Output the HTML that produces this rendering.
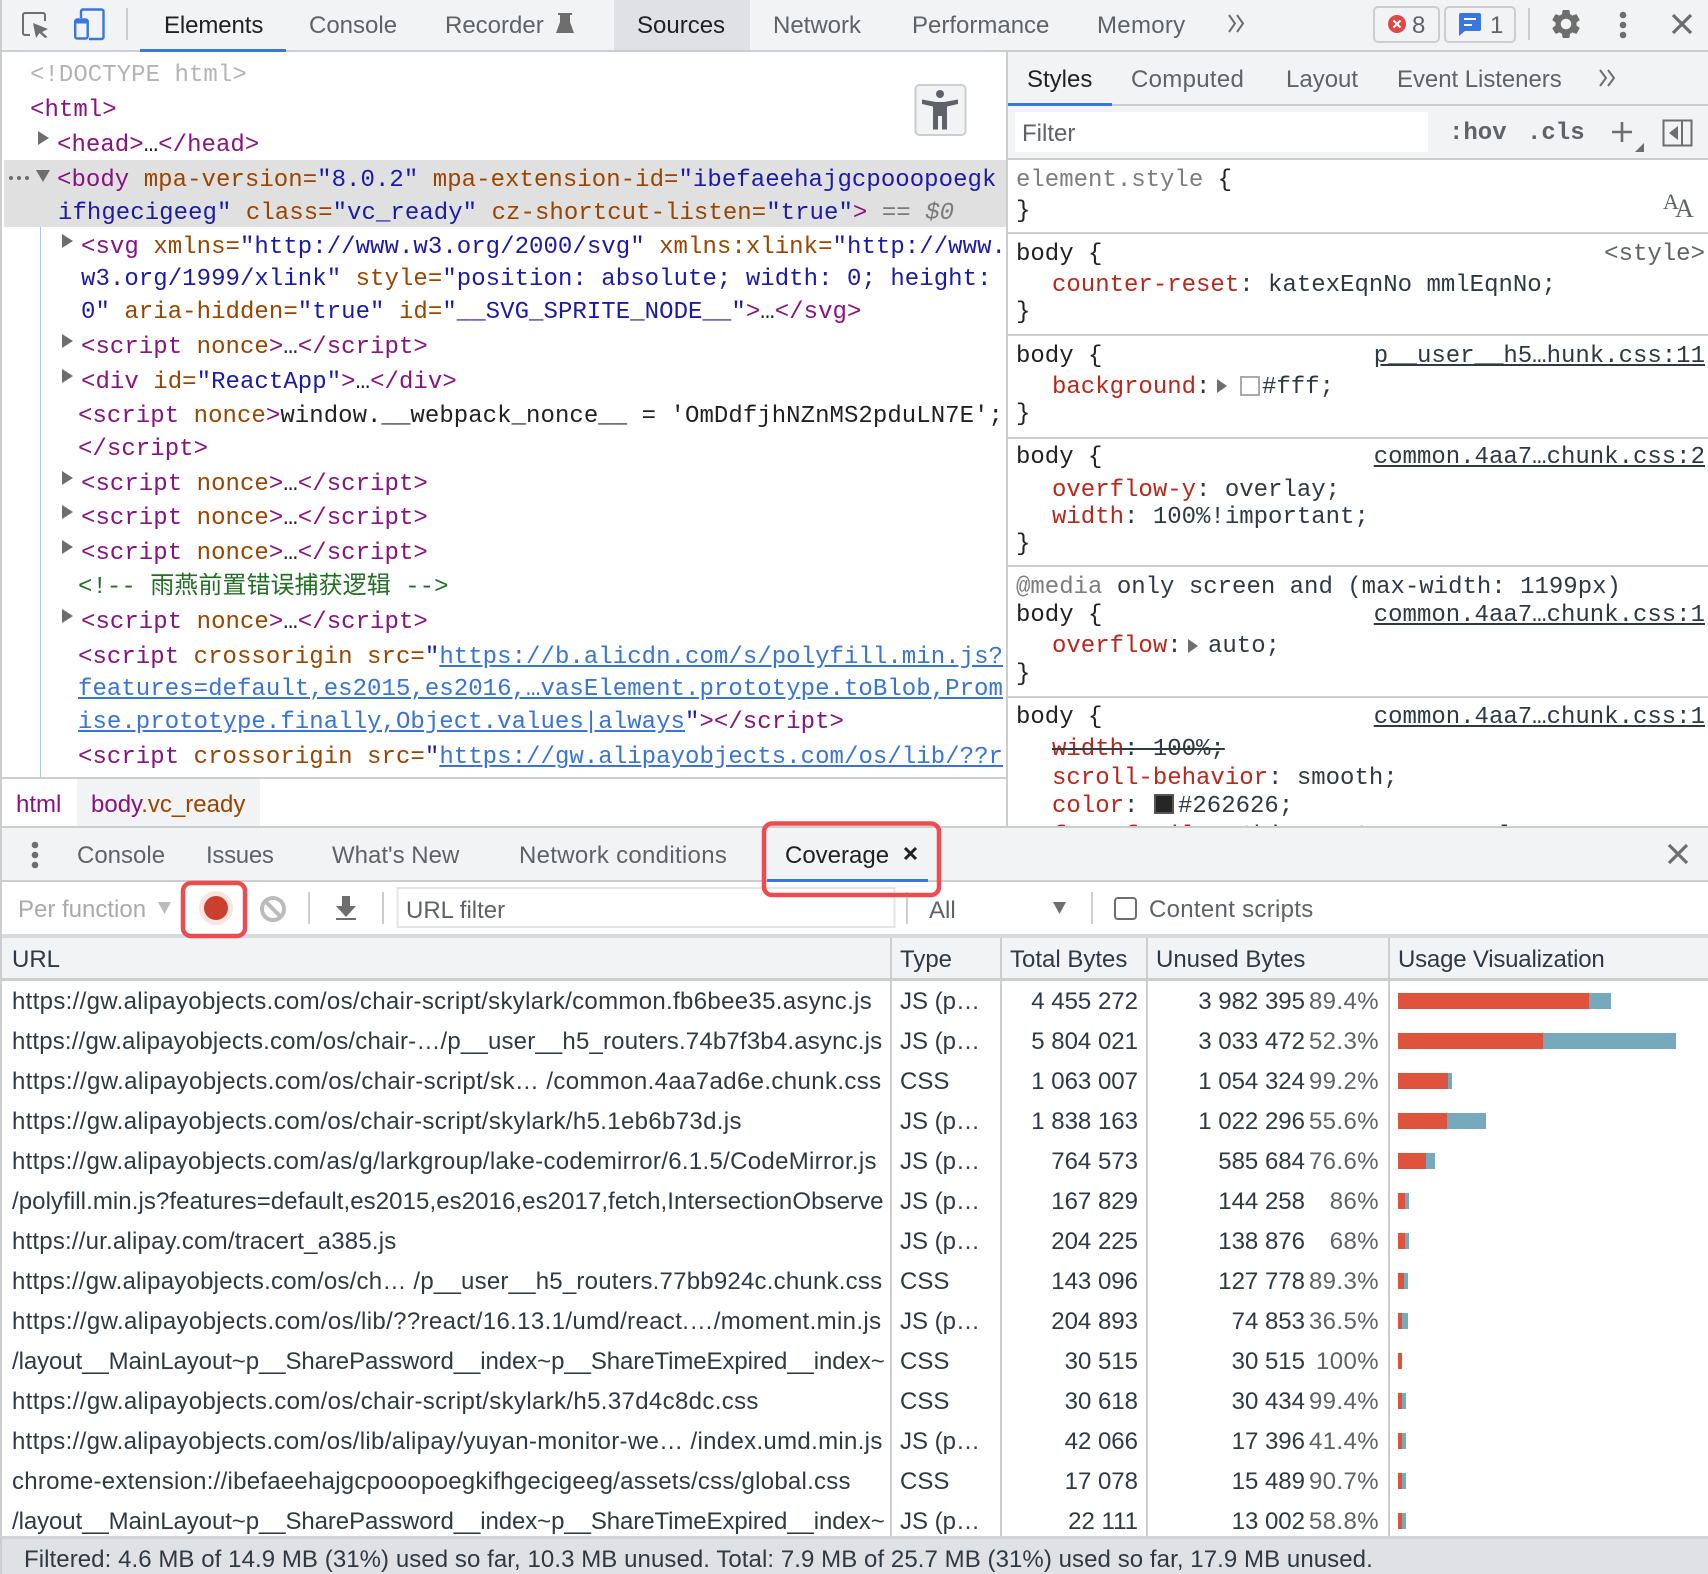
<!DOCTYPE html>
<html><head><meta charset="utf-8"><style>
html,body{margin:0;padding:0;background:#fff}
#p{position:relative;width:1708px;height:1574px;overflow:hidden;background:#fff}
#p svg.b{position:absolute;left:0;top:0}
.s,.m{position:absolute;white-space:pre;line-height:30px;height:30px}
.s{font:24px/30px "Liberation Sans","Noto Sans CJK SC",sans-serif;color:#303942}
.m{font:24px/30px "Liberation Mono","Noto Sans CJK SC",monospace;color:#303942;margin-top:3px}
.cd .m{letter-spacing:.05px}
.g{color:#5f6368}.k{color:#202124}
.c{position:absolute;left:0;top:0;width:1708px;height:1574px}
i{font-style:normal}
.t{color:#881280}.a{color:#994500}.v{color:#1a1aa6}.l{color:#3874d8;text-decoration:underline}
.p{color:#b9261a}.u{text-decoration:underline}
.n{color:#202124}
.pc{letter-spacing:.4px;color:#5f6368}
</style></head><body><div id="p">
<svg class="b" width="1708" height="1574" viewBox="0 0 1708 1574" xmlns="http://www.w3.org/2000/svg">
<rect x="0" y="0" width="1708" height="50" fill="#f1f3f4"/>
<rect x="614" y="0" width="136" height="50" fill="#dfe1e5"/>
<rect x="0" y="50" width="1708" height="2" fill="#cbcdd1"/>
<rect x="140" y="49" width="146" height="3" fill="#3a76e0"/>
<rect x="1008" y="52" width="700" height="106" fill="#f1f3f4"/>
<rect x="1008" y="104" width="700" height="2" fill="#cbcdd1"/>
<rect x="1008" y="103" width="104" height="3" fill="#3a76e0"/>
<rect x="1015" y="112" width="413" height="40" fill="#fff"/>
<rect x="1008" y="158" width="700" height="2" fill="#cbcdd1"/>
<rect x="1006" y="52" width="2" height="776" fill="#cbcdd1"/>
<rect x="4" y="160" width="1002" height="67" fill="#e0e0e0"/>
<rect x="40" y="227" width="1" height="550" fill="#a9c7f2"/>
<rect x="1008" y="232" width="700" height="2" fill="#cbcdd1"/>
<rect x="1008" y="334" width="700" height="2" fill="#cbcdd1"/>
<rect x="1008" y="437" width="700" height="2" fill="#cbcdd1"/>
<rect x="1008" y="565" width="700" height="2" fill="#cbcdd1"/>
<rect x="1008" y="696" width="700" height="2" fill="#cbcdd1"/>
<rect x="0" y="777" width="1006" height="2" fill="#cbcdd1"/>
<rect x="77" y="779" width="183" height="47" fill="#f1f3f4"/>
<rect x="0" y="826" width="1708" height="2" fill="#cbcdd1"/>
<rect x="0" y="828" width="1708" height="52" fill="#f1f3f4"/>
<rect x="0" y="880" width="1708" height="2" fill="#cbcdd1"/>
<rect x="767" y="879" width="161" height="3" fill="#3a76e0"/>
<rect x="0" y="934" width="1708" height="4" fill="#d8dadd"/>
<rect x="0" y="938" width="1708" height="40" fill="#f1f3f4"/>
<rect x="0" y="978" width="1708" height="3" fill="#cbcdd1"/>
<g fill="#cbcdd1"><rect x="890" y="938" width="2" height="598"/><rect x="1000" y="938" width="2" height="598"/><rect x="1146" y="938" width="2" height="598"/><rect x="1388" y="938" width="2" height="598"/></g>
<rect x="0" y="1536" width="1708" height="38" fill="#dfe1e5"/>
<rect x="0" y="1536" width="1708" height="3" fill="#d2d3d6"/>
<rect x="0" y="0" width="2" height="1574" fill="#cbcdd1"/>

<g fill="#df533c">
<rect x="1398" y="993" width="191" height="16"/><rect x="1398" y="1033" width="145" height="16"/><rect x="1398" y="1073" width="50" height="16"/><rect x="1398" y="1113" width="49" height="16"/><rect x="1398" y="1153" width="28" height="16"/><rect x="1398" y="1193" width="7" height="16"/><rect x="1398" y="1233" width="7" height="16"/><rect x="1398" y="1273" width="6" height="16"/><rect x="1398" y="1313" width="4" height="16"/><rect x="1398" y="1353" width="4" height="16"/><rect x="1398" y="1393" width="4" height="16"/><rect x="1398" y="1433" width="4" height="16"/><rect x="1398" y="1473" width="4" height="16"/><rect x="1398" y="1513" width="4" height="16"/>
</g>
<g fill="#76a9bc">
<rect x="1589" y="993" width="22" height="16"/><rect x="1543" y="1033" width="133" height="16"/><rect x="1448" y="1073" width="4" height="16"/><rect x="1447" y="1113" width="39" height="16"/><rect x="1426" y="1153" width="9" height="16"/><rect x="1405" y="1193" width="4" height="16"/><rect x="1405" y="1233" width="4" height="16"/><rect x="1404" y="1273" width="4" height="16"/><rect x="1402" y="1313" width="6" height="16"/><rect x="1402" y="1393" width="4" height="16"/><rect x="1402" y="1433" width="4" height="16"/><rect x="1402" y="1473" width="4" height="16"/><rect x="1402" y="1513" width="4" height="16"/>
</g>

<!-- inspect icon -->
<path d="M30 35H25a2 2 0 0 1-2-2V15a2 2 0 0 1 2-2H43a2 2 0 0 1 2 2V21" fill="none" stroke="#6e6e6e" stroke-width="2"/>
<path d="M33 23 L48 29 L42 32 L47.5 37 L45 38 L39.5 33 L36 38 Z" fill="#6e6e6e"/>
<!-- device icon -->
<path d="M81 18V11.5A2 2 0 0 1 83 9.5H101.5A2 2 0 0 1 103.500 11.500V37a2 2 0 0 1-2 2H89" fill="none" stroke="#3a76e0" stroke-width="2.400"/>
<rect x="75.200" y="19.500" width="12.500" height="19" rx="2" fill="none" stroke="#3a76e0" stroke-width="2.400"/>
<rect x="75.200" y="19.500" width="12.500" height="4" fill="#3a76e0"/>
<rect x="126" y="8" width="2" height="32" fill="#cbcdd1"/>
<!-- flask -->
<path d="M558 13H572V15H570V22L574 33H556L560 22V15H558Z" fill="#6e6e6e"/>
<!-- chevrons -->
<path d="M1229 15l6 8.500-6 8.500M1237 15l6 8.500-6 8.500" fill="none" stroke="#6e6e6e" stroke-width="2"/>
<path d="M1600 70l6 8-6 8M1608 70l6 8-6 8" fill="none" stroke="#6e6e6e" stroke-width="2"/>
<!-- badges -->
<rect x="1374" y="7" width="65" height="35" rx="4" fill="none" stroke="#cbcdd1" stroke-width="2"/>
<rect x="1445" y="7" width="70" height="35" rx="4" fill="none" stroke="#cbcdd1" stroke-width="2"/>
<circle cx="1397" cy="24" r="9" fill="#dc4a47"/>
<path d="M1393.500 20.500l7 7m0-7l-7 7" stroke="#fff" stroke-width="2"/>
<path d="M1461 13H1479a2 2 0 0 1 2 2V29a2 2 0 0 1-2 2H1465L1459 36V15a2 2 0 0 1 2-2Z" fill="#3a76e0"/>
<rect x="1464" y="18" width="12" height="2" fill="#fff"/><rect x="1464" y="24" width="8" height="2" fill="#fff"/>
<rect x="1528" y="8" width="2" height="32" fill="#cbcdd1"/>
<g transform="translate(1548.500 6.500) scale(1.460)"><path fill="#6e6e6e" d="M19.140 12.940c.04-.3.06-.61.06-.94 0-.32-.02-.64-.07-.94l2.030-1.580a.49.49 0 0 0 .12-.61l-1.920-3.320a.488.488 0 0 0-.59-.22l-2.390.96c-.5-.38-1.030-.7-1.620-.94l-.36-2.540a.484.484 0 0 0-.48-.41h-3.840c-.24 0-.43.17-.47.41l-.36 2.540c-.59.24-1.130.57-1.620.94l-2.390-.96c-.22-.08-.47 0-.59.22L2.740 8.870c-.12.21-.08.47.12.61l2.030 1.580c-.05.3-.09.63-.09.94s.02.64.07.94l-2.030 1.580a.49.49 0 0 0-.12.61l1.920 3.320c.12.22.37.29.59.22l2.390-.96c.5.38 1.030.7 1.620.94l.36 2.540c.05.24.24.41.48.41h3.840c.24 0 .44-.17.47-.41l.36-2.540c.59-.24 1.130-.56 1.620-.94l2.390.96c.22.08.47 0 .59-.22l1.920-3.320c.12-.22.07-.47-.12-.61l-2.010-1.580zM12 15.600c-1.980 0-3.600-1.620-3.600-3.600s1.620-3.600 3.600-3.600 3.600 1.620 3.600 3.600-1.620 3.600-3.600 3.600z"/></g>
<g fill="#6e6e6e"><circle cx="1623" cy="15" r="3.300"/><circle cx="1623" cy="25" r="3.300"/><circle cx="1623" cy="35" r="3.300"/></g>
<path d="M1673 15l18 18m0-18l-18 18" stroke="#6e6e6e" stroke-width="3.200"/>
<!-- a11y button -->
<rect x="915.500" y="85" width="50" height="50" rx="4" fill="#f1f3f4" stroke="#cbcdd1" stroke-width="2"/>
<circle cx="940" cy="94" r="4" fill="#5f6368"/>
<path d="M922 99.500L936 102H944L958 99.500V104L947 106.500V129.500H942V116H938V129.500H933V106.500L922 104Z" fill="#5f6368"/>
<!-- plus etc -->
<path d="M1622 122V142M1612 132H1632" stroke="#6e6e6e" stroke-width="2.600"/>
<path d="M1644 143V152H1635Z" fill="#6e6e6e"/>
<rect x="1663.500" y="120.500" width="28" height="25" fill="none" stroke="#6e6e6e" stroke-width="2"/>
<rect x="1681" y="120" width="2" height="26" fill="#6e6e6e"/>
<path d="M1678 126V140L1669 133Z" fill="#6e6e6e"/>
<!-- dom triangles -->
<g fill="#6e6e6e">
<path d="M38 131l11 7-11 7Z"/><path d="M36 170H50L43 182Z"/>
<path d="M62 234l11 7-11 7Z"/><path d="M62 334l11 7-11 7Z"/><path d="M62 369l11 7-11 7Z"/><path d="M62 471l11 7-11 7Z"/><path d="M62 505l11 7-11 7Z"/><path d="M62 540l11 7-11 7Z"/><path d="M62 609l11 7-11 7Z"/>
<path d="M1217 379l10 7-10 7Z"/><path d="M1188 639l10 7-10 7Z"/>
<circle cx="11" cy="178" r="2"/><circle cx="19" cy="178" r="2"/><circle cx="27" cy="178" r="2"/>
</g>
<rect x="1241" y="377" width="18" height="18" fill="#fff" stroke="#aaa" stroke-width="2"/>
<rect x="1155" y="795" width="18" height="18" fill="#262626" stroke="#555" stroke-width="2"/>
<!-- drawer icons -->
<g fill="#6e6e6e"><circle cx="35" cy="845" r="3.300"/><circle cx="35" cy="855" r="3.300"/><circle cx="35" cy="865" r="3.300"/></g>
<path d="M905 848l11 11m0-11l-11 11" stroke="#202124" stroke-width="3"/>
<path d="M1669 845l18 18m0-18l-18 18" stroke="#6e6e6e" stroke-width="3.200"/>
<path d="M158 902H171L164.500 914Z" fill="#bbb"/>
<circle cx="216" cy="908" r="17" fill="#f4c9c3" opacity=".5"/>
<circle cx="216" cy="908" r="12" fill="#c9402f"/>
<circle cx="273" cy="909" r="11" fill="none" stroke="#bbb" stroke-width="4"/>
<path d="M265.500 901.500l15 15" stroke="#bbb" stroke-width="4"/>
<rect x="308" y="892" width="2" height="32" fill="#cbcdd1"/>
<path d="M342 896H350V906H356L346 917L336 906H342Z" fill="#6e6e6e"/><rect x="336" y="918" width="20" height="2" fill="#6e6e6e"/>
<rect x="382" y="892" width="2" height="32" fill="#cbcdd1"/>
<rect x="397.500" y="888" width="497" height="39" fill="#fff" stroke="#e4e4e4" stroke-width="2"/>
<rect x="906" y="892" width="2" height="32" fill="#cbcdd1"/>
<path d="M1053 902H1066L1059.500 914Z" fill="#6e6e6e"/>
<rect x="1091" y="892" width="2" height="32" fill="#cbcdd1"/>
<rect x="1115" y="898" width="21" height="21" rx="3" fill="#fff" stroke="#6e6e6e" stroke-width="2"/>
</svg>

<div class="c">
<span class="s k" style="left:164px;top:11px;letter-spacing:-.1px">Elements</span>
<span class="s g" style="left:309px;top:11px">Console</span>
<span class="s g" style="left:445px;top:11px">Recorder</span>
<span class="s k" style="left:637px;top:11px">Sources</span>
<span class="s g" style="left:773px;top:11px">Network</span>
<span class="s g" style="left:912px;top:11px">Performance</span>
<span class="s g" style="left:1097px;top:11px;letter-spacing:.3px">Memory</span>
<span class="s g" style="left:1412px;top:11px">8</span>
<span class="s g" style="left:1490px;top:11px">1</span>
<span class="s k" style="left:1027px;top:65px">Styles</span>
<span class="s g" style="left:1131px;top:65px;letter-spacing:.3px">Computed</span>
<span class="s g" style="left:1286px;top:65px">Layout</span>
<span class="s g" style="left:1397px;top:65px;letter-spacing:-.05px">Event Listeners</span>
<span class="s g" style="left:1022px;top:119px">Filter</span>
<span class="m g" style="left:1449px;top:116px;font-weight:bold">:hov</span>
<span class="m g" style="left:1527px;top:116px;font-weight:bold">.cls</span>
<span class="s g" style="left:1663px;top:190px;font:22px/24px 'Liberation Serif',serif;height:24px">A</span>
<span class="s g" style="left:1675px;top:197px;font:26px/24px 'Liberation Serif',serif;height:24px">A</span>
</div>

<div class="c cd" style="clip-path:inset(52px 705px 797px 0)">
<span class="m" style="left:30px;top:58px;color:#b4b4b4">&lt;!DOCTYPE html&gt;</span>
<span class="m t" style="left:30px;top:93px">&lt;html&gt;</span>
<span class="m t" style="left:57px;top:128px">&lt;head&gt;<i class="n">…</i>&lt;/head&gt;</span>
<span class="m t" style="left:57px;top:163px">&lt;body <i class="a">mpa-version=</i><i class="v">"8.0.2"</i> <i class="a">mpa-extension-id=</i><i class="v">"ibefaeehajgcpooopoegk</i></span>
<span class="m v" style="left:58px;top:196px">ifhgecigeeg" <i class="a">class=</i>"vc_ready" <i class="a">cz-shortcut-listen=</i>"true"<i class="t">&gt;</i><i style="color:#7a7a7a"> == <em>$0</em></i></span>
<span class="m t" style="left:81px;top:230px">&lt;svg <i class="a">xmlns=</i><i class="v">"http://www.w3.org/2000/svg"</i> <i class="a">xmlns:xlink=</i><i class="v">"http://www.</i></span>
<span class="m v" style="left:81px;top:262px">w3.org/1999/xlink" <i class="a">style=</i>"position: absolute; width: 0; height:</span>
<span class="m v" style="left:81px;top:295px">0" <i class="a">aria-hidden=</i>"true" <i class="a">id=</i>"__SVG_SPRITE_NODE__"<i class="t">&gt;</i><i class="n">…</i><i class="t">&lt;/svg&gt;</i></span>
<span class="m t" style="left:81px;top:330px">&lt;script <i class="a">nonce</i>&gt;<i class="n">…</i>&lt;/script&gt;</span>
<span class="m t" style="left:81px;top:365px">&lt;div <i class="a">id=</i><i class="v">"ReactApp"</i>&gt;<i class="n">…</i>&lt;/div&gt;</span>
<span class="m t" style="left:78px;top:399px">&lt;script <i class="a">nonce</i>&gt;<i class="n">window.__webpack_nonce__ = 'OmDdfjhNZnMS2pduLN7E';</i></span>
<span class="m t" style="left:78px;top:432px">&lt;/script&gt;</span>
<span class="m t" style="left:81px;top:467px">&lt;script <i class="a">nonce</i>&gt;<i class="n">…</i>&lt;/script&gt;</span>
<span class="m t" style="left:81px;top:501px">&lt;script <i class="a">nonce</i>&gt;<i class="n">…</i>&lt;/script&gt;</span>
<span class="m t" style="left:81px;top:536px">&lt;script <i class="a">nonce</i>&gt;<i class="n">…</i>&lt;/script&gt;</span>
<span class="m" style="left:78px;top:570px;color:#236e25">&lt;!-- 雨燕前置错误捕获逻辑 --&gt;</span>
<span class="m t" style="left:81px;top:605px">&lt;script <i class="a">nonce</i>&gt;<i class="n">…</i>&lt;/script&gt;</span>
<span class="m t" style="left:78px;top:640px">&lt;script <i class="a">crossorigin src=</i><i class="v">"</i><i class="l">https://b.alicdn.com/s/polyfill.min.js?</i></span>
<span class="m l" style="left:78px;top:672px">features=default,es2015,es2016,…vasElement.prototype.toBlob,Prom</span>
<span class="m" style="left:78px;top:705px"><i class="l">ise.prototype.finally,Object.values|always</i><i class="v">"</i><i class="t">&gt;&lt;/script&gt;</i></span>
<span class="m t" style="left:78px;top:740px">&lt;script <i class="a">crossorigin src=</i><i class="v">"</i><i class="l">https://gw.alipayobjects.com/os/lib/??r</i></span>
<span class="m l" style="left:78px;top:773px">eact/16.13.1/umd/react.production.min.js,react-dom/16.13.1/umd/r</span>
</div>

<div class="c" style="clip-path:inset(160px 0 748px 1008px)">
<span class="m" style="left:1016px;top:163px"><i style="color:#7d7d7d">element.style</i> <i class="n">{</i></span>
<span class="m n" style="left:1016px;top:194px">}</span>
<span class="m n" style="left:1016px;top:237px">body {</span>
<span class="m g" style="right:3px;top:237px">&lt;style&gt;</span>
<span class="m" style="left:1052px;top:268px"><i class="p">counter-reset</i>: katexEqnNo mmlEqnNo;</span>
<span class="m n" style="left:1016px;top:295px">}</span>
<span class="m n" style="left:1016px;top:339px">body {</span>
<span class="m u" style="right:3px;top:339px">p__user__h5…hunk.css:11</span>
<span class="m p" style="left:1052px;top:370px">background<i style="color:#303942">:</i></span>
<span class="m" style="left:1262px;top:370px">#fff;</span>
<span class="m n" style="left:1016px;top:397px">}</span>
<span class="m n" style="left:1016px;top:440px">body {</span>
<span class="m u" style="right:3px;top:440px">common.4aa7…chunk.css:2</span>
<span class="m" style="left:1052px;top:473px"><i class="p">overflow-y</i>: overlay;</span>
<span class="m" style="left:1052px;top:500px"><i class="p">width</i>: 100%!important;</span>
<span class="m n" style="left:1016px;top:527px">}</span>
<span class="m" style="left:1016px;top:570px"><i style="color:#7d7d7d">@media</i> only screen and (max-width: 1199px)</span>
<span class="m n" style="left:1016px;top:598px">body {</span>
<span class="m u" style="right:3px;top:598px">common.4aa7…chunk.css:1</span>
<span class="m p" style="left:1052px;top:629px">overflow<i style="color:#303942">:</i></span>
<span class="m" style="left:1208px;top:629px">auto;</span>
<span class="m n" style="left:1016px;top:657px">}</span>
<span class="m n" style="left:1016px;top:700px">body {</span>
<span class="m u" style="right:3px;top:700px">common.4aa7…chunk.css:1</span>
<span class="m" style="left:1052px;top:732px;text-decoration:line-through;text-decoration-thickness:2px"><i class="p">width</i>: 100%;</span>
<span class="m" style="left:1052px;top:761px"><i class="p">scroll-behavior</i>: smooth;</span>
<span class="m p" style="left:1052px;top:789px">color<i style="color:#303942">:</i></span>
<span class="m" style="left:1178px;top:789px">#262626;</span>
<span class="m" style="left:1052px;top:819px"><i class="p">font-family</i>: Chinese Quote,-apple-system;</span>
</div>

<div class="c">
<span class="s t" style="left:16px;top:790px">html</span>
<span class="s t" style="left:91px;top:790px">body<i class="a">.vc_ready</i></span>
<span class="s g" style="left:77px;top:841px">Console</span>
<span class="s g" style="left:206px;top:841px;letter-spacing:-.3px">Issues</span>
<span class="s g" style="left:332px;top:841px">What's New</span>
<span class="s g" style="left:519px;top:841px;letter-spacing:.3px">Network conditions</span>
<span class="s k" style="left:785px;top:841px">Coverage</span>
<span class="s" style="left:18px;top:895px;color:#aaa">Per function</span>
<span class="s g" style="left:406px;top:896px">URL filter</span>
<span class="s g" style="left:929px;top:896px">All</span>
<span class="s g" style="left:1149px;top:895px;letter-spacing:.3px">Content scripts</span>
<span class="s" style="left:12px;top:945px">URL</span>
<span class="s" style="left:900px;top:945px">Type</span>
<span class="s" style="left:1010px;top:945px">Total Bytes</span>
<span class="s" style="left:1156px;top:945px">Unused Bytes</span>
<span class="s" style="left:1398px;top:945px;letter-spacing:-.2px">Usage Visualization</span>
</div>

<div class="c" style="clip-path:inset(980px 820px 38px 0)">
<span class="s" style="left:12px;top:987px;letter-spacing:.325px">https://gw.alipayobjects.com/os/chair-script/skylark/common.fb6bee35.async.js</span>
<span class="s" style="left:12px;top:1027px;letter-spacing:.18px">https://gw.alipayobjects.com/os/chair-…/p__user__h5_routers.74b7f3b4.async.js</span>
<span class="s" style="left:12px;top:1067px;letter-spacing:.37px">https://gw.alipayobjects.com/os/chair-script/sk… /common.4aa7ad6e.chunk.css</span>
<span class="s" style="left:12px;top:1107px;letter-spacing:.34px">https://gw.alipayobjects.com/os/chair-script/skylark/h5.1eb6b73d.js</span>
<span class="s" style="left:12px;top:1147px;letter-spacing:.31px">https://gw.alipayobjects.com/as/g/larkgroup/lake-codemirror/6.1.5/CodeMirror.js</span>
<span class="s" style="left:12px;top:1187px;letter-spacing:.08px">/polyfill.min.js?features=default,es2015,es2016,es2017,fetch,IntersectionObserve</span>
<span class="s" style="left:12px;top:1227px;letter-spacing:.2px">https://ur.alipay.com/tracert_a385.js</span>
<span class="s" style="left:12px;top:1267px;letter-spacing:.22px">https://gw.alipayobjects.com/os/ch… /p__user__h5_routers.77bb924c.chunk.css</span>
<span class="s" style="left:12px;top:1307px;letter-spacing:.36px">https://gw.alipayobjects.com/os/lib/??react/16.13.1/umd/react.…/moment.min.js</span>
<span class="s" style="left:12px;top:1347px;letter-spacing:-.09px">/layout__MainLayout~p__SharePassword__index~p__ShareTimeExpired__index~</span>
<span class="s" style="left:12px;top:1387px;letter-spacing:.35px">https://gw.alipayobjects.com/os/chair-script/skylark/h5.37d4c8dc.css</span>
<span class="s" style="left:12px;top:1427px;letter-spacing:.32px">https://gw.alipayobjects.com/os/lib/alipay/yuyan-monitor-we… /index.umd.min.js</span>
<span class="s" style="left:12px;top:1467px;letter-spacing:.25px">chrome-extension://ibefaeehajgcpooopoegkifhgecigeeg/assets/css/global.css</span>
<span class="s" style="left:12px;top:1507px;letter-spacing:-.09px">/layout__MainLayout~p__SharePassword__index~p__ShareTimeExpired__index~</span>
</div>

<div class="c">
<span class="s" style="left:900px;top:987px">JS (p…</span><span class="s" style="right:570px;top:987px">4 455 272</span><span class="s" style="right:403px;top:987px">3 982 395</span><span class="s pc" style="right:329px;top:987px">89.4%</span>
<span class="s" style="left:900px;top:1027px">JS (p…</span><span class="s" style="right:570px;top:1027px">5 804 021</span><span class="s" style="right:403px;top:1027px">3 033 472</span><span class="s pc" style="right:329px;top:1027px">52.3%</span>
<span class="s" style="left:900px;top:1067px">CSS</span><span class="s" style="right:570px;top:1067px">1 063 007</span><span class="s" style="right:403px;top:1067px">1 054 324</span><span class="s pc" style="right:329px;top:1067px">99.2%</span>
<span class="s" style="left:900px;top:1107px">JS (p…</span><span class="s" style="right:570px;top:1107px">1 838 163</span><span class="s" style="right:403px;top:1107px">1 022 296</span><span class="s pc" style="right:329px;top:1107px">55.6%</span>
<span class="s" style="left:900px;top:1147px">JS (p…</span><span class="s" style="right:570px;top:1147px">764 573</span><span class="s" style="right:403px;top:1147px">585 684</span><span class="s pc" style="right:329px;top:1147px">76.6%</span>
<span class="s" style="left:900px;top:1187px">JS (p…</span><span class="s" style="right:570px;top:1187px">167 829</span><span class="s" style="right:403px;top:1187px">144 258</span><span class="s pc" style="right:329px;top:1187px">86%</span>
<span class="s" style="left:900px;top:1227px">JS (p…</span><span class="s" style="right:570px;top:1227px">204 225</span><span class="s" style="right:403px;top:1227px">138 876</span><span class="s pc" style="right:329px;top:1227px">68%</span>
<span class="s" style="left:900px;top:1267px">CSS</span><span class="s" style="right:570px;top:1267px">143 096</span><span class="s" style="right:403px;top:1267px">127 778</span><span class="s pc" style="right:329px;top:1267px">89.3%</span>
<span class="s" style="left:900px;top:1307px">JS (p…</span><span class="s" style="right:570px;top:1307px">204 893</span><span class="s" style="right:403px;top:1307px">74 853</span><span class="s pc" style="right:329px;top:1307px">36.5%</span>
<span class="s" style="left:900px;top:1347px">CSS</span><span class="s" style="right:570px;top:1347px">30 515</span><span class="s" style="right:403px;top:1347px">30 515</span><span class="s pc" style="right:329px;top:1347px">100%</span>
<span class="s" style="left:900px;top:1387px">CSS</span><span class="s" style="right:570px;top:1387px">30 618</span><span class="s" style="right:403px;top:1387px">30 434</span><span class="s pc" style="right:329px;top:1387px">99.4%</span>
<span class="s" style="left:900px;top:1427px">JS (p…</span><span class="s" style="right:570px;top:1427px">42 066</span><span class="s" style="right:403px;top:1427px">17 396</span><span class="s pc" style="right:329px;top:1427px">41.4%</span>
<span class="s" style="left:900px;top:1467px">CSS</span><span class="s" style="right:570px;top:1467px">17 078</span><span class="s" style="right:403px;top:1467px">15 489</span><span class="s pc" style="right:329px;top:1467px">90.7%</span>
<span class="s" style="left:900px;top:1507px">JS (p…</span><span class="s" style="right:570px;top:1507px">22 111</span><span class="s" style="right:403px;top:1507px">13 002</span><span class="s pc" style="right:329px;top:1507px">58.8%</span>
<span class="s" style="left:24px;top:1545px;letter-spacing:.07px">Filtered: 4.6 MB of 14.9 MB (31%) used so far, 10.3 MB unused. Total: 7.9 MB of 25.7 MB (31%) used so far, 17.9 MB unused.</span>
</div>

<svg class="b" width="1708" height="1574" viewBox="0 0 1708 1574" xmlns="http://www.w3.org/2000/svg" style="pointer-events:none">
<rect x="764" y="823.500" width="175" height="71.500" rx="8" fill="none" stroke="#ee4b50" stroke-width="4.500"/>
<rect x="183" y="883" width="62" height="53" rx="8" fill="none" stroke="#ee4b50" stroke-width="4.500"/>
</svg>
</div></body></html>
